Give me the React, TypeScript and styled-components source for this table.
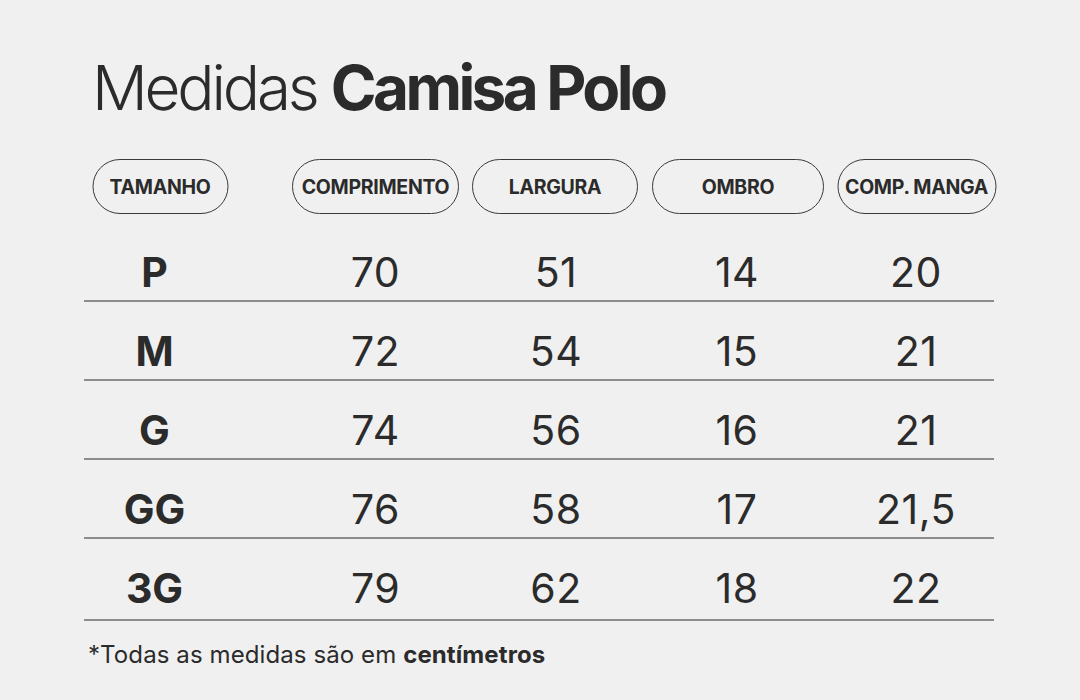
import React from 'react';
import styled, {createGlobalStyle} from 'styled-components';

const GlobalStyle = createGlobalStyle`
html, body {
margin: 0;
padding: 0;
background: #f0f0f0;
}
body {
font-family: Inter, "Noto Sans", sans-serif;
color: #2b2b2b;
}
`;

const Page = styled.div`
width: 1080px;
height: 700px;
box-sizing: border-box;
padding: 52px 86px 0 84px;
display: flex;
flex-direction: column;
`;

const Title = styled.h1`
margin: 0 0 0 8px;
font-size: 62px;
line-height: 72px;
font-weight: 300;
letter-spacing: -3.2px;
color: #2b2b2b;
`;

const Strong = styled.span`
font-weight: 700;
letter-spacing: -3.6px;
`;

const Table = styled.div`
margin-top: 35px;
width: 910px;
display: flex;
flex-direction: column;
`;

const columns = '202px 179px 182px 180px 167px';

const HeaderRow = styled.div`
display: grid;
grid-template-columns: ${columns};
height: 55px;
margin-bottom: 9px;
`;

const Row = styled.div`
display: grid;
grid-template-columns: ${columns};
height: 77px;
align-items: end;
border-bottom: 2px solid #8c8c8c;

&:last-child {
padding-bottom: 3px;
}
`;

const Cell = styled.div<{$first?: boolean; $last?: boolean}>`
display: flex;
justify-content: center;
align-items: flex-end;
height: 100%;
padding-right: ${p => (p.$first ? '61px' : '0')};
margin-right: ${p => (p.$last ? '-11px' : '0')};
`;

const HeadCell = styled(Cell)`
align-items: center;
`;

const Pill = styled.div<{$w: number; $shift?: number}>`
box-sizing: border-box;
width: ${p => p.$w}px;
height: 55px;
flex-shrink: 0;
border: 1px solid #3a3a3a;
border-radius: 28px;
display: flex;
align-items: center;
justify-content: center;
font-size: 19.5px;
font-weight: 700;
letter-spacing: -0.3px;
color: #2b2b2b;
transform: translateX(${p => p.$shift ?? 0}px);
`;

const Value = styled.div<{$bold?: boolean}>`
font-size: 41px;
line-height: 1;
padding-bottom: 7px;
font-weight: ${p => (p.$bold ? 700 : 400)};
letter-spacing: ${p => (p.$bold ? '0' : '0.5px')};
`;

const Note = styled.p`
margin: 19px 0 0 4px;
font-size: 24px;
font-weight: 400;
letter-spacing: 0.1px;
`;

const NoteBold = styled.span`
font-weight: 700;
`;

const headers = [
    {label: 'TAMANHO', w: 136, shift: 5.5},
    {label: 'COMPRIMENTO', w: 167, shift: 0},
    {label: 'LARGURA', w: 166, shift: -1},
    {label: 'OMBRO', w: 172, shift: 1},
    {label: 'COMP. MANGA', w: 159, shift: 0.5},
];

const rows = [
    ['P', '70', '51', '14', '20'],
    ['M', '72', '54', '15', '21'],
    ['G', '74', '56', '16', '21'],
    ['GG', '76', '58', '17', '21,5'],
    ['3G', '79', '62', '18', '22'],
];

export default function App() {
    return (
        <>
            <GlobalStyle/>
            <Page>
                <Title>
                    Medidas <Strong>Camisa Polo</Strong>
                </Title>
                <Table>
                    <HeaderRow>
                        {headers.map((h, i) => (
                            <HeadCell
                                key={h.label}
                                $first={i === 0}
                                $last={i === headers.length - 1}
                            >
                                <Pill
                                    $w={h.w}
                                    $shift={h.shift}
                                >
                                    {h.label}
                                </Pill>
                            </HeadCell>
                        ))}
                    </HeaderRow>
                    {rows.map(r => (
                        <Row key={r[0]}>
                            {r.map((v, i) => (
                                <Cell
                                    key={i}
                                    $first={i === 0}
                                    $last={i === r.length - 1}
                                >
                                    <Value $bold={i === 0}>{v}</Value>
                                </Cell>
                            ))}
                        </Row>
                    ))}
                </Table>
                <Note>
                    *Todas as medidas são em <NoteBold>centímetros</NoteBold>
                </Note>
            </Page>
        </>
    );
}
